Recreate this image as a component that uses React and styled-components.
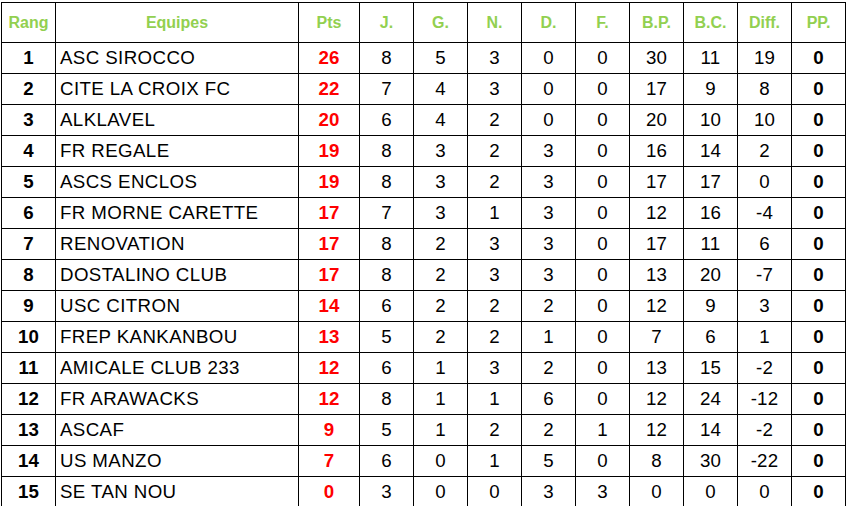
import styled, { createGlobalStyle } from 'styled-components';

const GlobalStyle = createGlobalStyle`
  html, body {
    margin: 0;
    padding: 0;
    background: #fff;
  }
  body {
    font-family: "Liberation Sans", Arial, sans-serif;
  }
`;

const columns = [
  { key: 'rank', label: 'Rang', width: 54 },
  { key: 'team', label: 'Equipes', width: 243 },
  { key: 'pts', label: 'Pts', width: 61 },
  { key: 'j', label: 'J.', width: 54 },
  { key: 'g', label: 'G.', width: 54 },
  { key: 'n', label: 'N.', width: 54 },
  { key: 'd', label: 'D.', width: 54 },
  { key: 'f', label: 'F.', width: 54 },
  { key: 'bp', label: 'B.P.', width: 54 },
  { key: 'bc', label: 'B.C.', width: 54 },
  { key: 'diff', label: 'Diff.', width: 54 },
  { key: 'pp', label: 'PP.', width: 54 },
];

const rows = [
  [1, 'ASC SIROCCO', 26, 8, 5, 3, 0, 0, 30, 11, 19, 0],
  [2, 'CITE LA CROIX FC', 22, 7, 4, 3, 0, 0, 17, 9, 8, 0],
  [3, 'ALKLAVEL', 20, 6, 4, 2, 0, 0, 20, 10, 10, 0],
  [4, 'FR REGALE', 19, 8, 3, 2, 3, 0, 16, 14, 2, 0],
  [5, 'ASCS ENCLOS', 19, 8, 3, 2, 3, 0, 17, 17, 0, 0],
  [6, 'FR MORNE CARETTE', 17, 7, 3, 1, 3, 0, 12, 16, -4, 0],
  [7, 'RENOVATION', 17, 8, 2, 3, 3, 0, 17, 11, 6, 0],
  [8, 'DOSTALINO CLUB', 17, 8, 2, 3, 3, 0, 13, 20, -7, 0],
  [9, 'USC CITRON', 14, 6, 2, 2, 2, 0, 12, 9, 3, 0],
  [10, 'FREP KANKANBOU', 13, 5, 2, 2, 1, 0, 7, 6, 1, 0],
  [11, 'AMICALE CLUB 233', 12, 6, 1, 3, 2, 0, 13, 15, -2, 0],
  [12, 'FR ARAWACKS', 12, 8, 1, 1, 6, 0, 12, 24, -12, 0],
  [13, 'ASCAF', 9, 5, 1, 2, 2, 1, 12, 14, -2, 0],
  [14, 'US MANZO', 7, 6, 0, 1, 5, 0, 8, 30, -22, 0],
  [15, 'SE TAN NOU', 0, 3, 0, 0, 3, 3, 0, 0, 0, 0],
];

const Wrapper = styled.div`
  padding: 2px 0 0 1px;
`;

const Table = styled.table`
  border-collapse: collapse;
  table-layout: fixed;
  border: 1px solid #000;
`;

const HeadCell = styled.th`
  height: 39px;
  padding: 0;
  border: 1px solid #000;
  color: #92d050;
  font-size: 16px;
  font-weight: bold;
  text-align: center;
  vertical-align: middle;
`;

const Cell = styled.td`
  height: 30px;
  padding: 0 4px;
  border: 1px solid #000;
  font-size: 18.7px;
  letter-spacing: ${(p) => (p.$left ? '0.4px' : '0.2px')};
  text-align: ${(p) => (p.$left ? 'left' : 'center')};
  font-weight: ${(p) => (p.$bold ? 'bold' : 'normal')};
  color: ${(p) => (p.$red ? '#ff0000' : '#000')};
  vertical-align: middle;
  white-space: nowrap;
  overflow: hidden;
`;

export default function App() {
  return (
    <>
      <GlobalStyle />
      <Wrapper>
        <Table>
          <colgroup>
            {columns.map((c) => (
              <col key={c.key} style={{ width: c.width }} />
            ))}
          </colgroup>
          <thead>
            <tr>
              {columns.map((c) => (
                <HeadCell key={c.key}>{c.label}</HeadCell>
              ))}
            </tr>
          </thead>
          <tbody>
            {rows.map((r) => (
              <tr key={r[0]}>
                {r.map((v, i) => (
                  <Cell
                    key={i}
                    $left={i === 1}
                    $bold={i === 0 || i === 2 || i === 11}
                    $red={i === 2}
                  >
                    {v}
                  </Cell>
                ))}
              </tr>
            ))}
          </tbody>
        </Table>
      </Wrapper>
    </>
  );
}
